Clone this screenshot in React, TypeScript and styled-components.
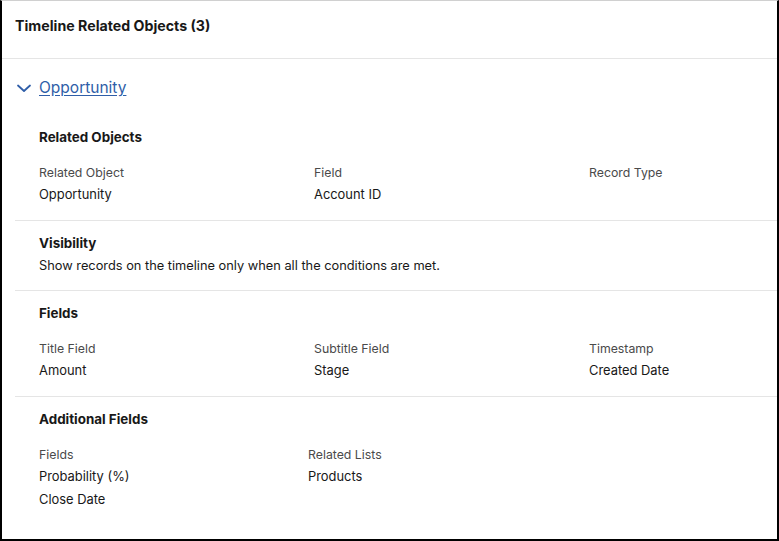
import React from 'react';
import styled, { createGlobalStyle } from 'styled-components';

const Global = createGlobalStyle`
    body {
        margin: 0;
        background: #ffffff;
        font-family: Inter, "Liberation Sans", Arial, sans-serif;
        color: #181818;
    }
`
const Frame = styled.div`
    width: 779px;
    height: 541px;
    box-sizing: border-box;
    border: 2px solid #000;
    border-top: 1px solid #d0d0d0;
    background: #fff;
    overflow: hidden;
`
const Header = styled.div`
    height: 58px;
    box-sizing: border-box;
    padding: 15px 13px 0;
    border-bottom: 1px solid #e5e5e5;
    font-size: 14.2px;
    font-weight: 700;
    line-height: 20px;
    color: #181818;
`
const Toggle = styled.div`
    display: flex;
    align-items: center;
    height: 20px;
    margin-top: 19px;
    padding-left: 14px;
    gap: 7px;
`
const ToggleLink = styled.a`
    font-size: 15.5px;
    line-height: 20px;
    color: #2f5ea8;
    text-decoration: underline;
    text-underline-offset: 2px;
    cursor: pointer;
`
const Section = styled.section<{ $first?: boolean }>`
    margin-left: 13px;
    padding: ${p => (p.$first ? '29px' : '12px')} 0 15px 24px;
    border-top: ${p => (p.$first ? 'none' : '1px solid #e5e5e5')};
`
const SectionTitle = styled.div`
    font-size: 13.4px;
    font-weight: 700;
    line-height: 20px;
`
const Grid = styled.div<{ $cols: string }>`
    display: grid;
    grid-template-columns: ${p => p.$cols};
    margin-top: 17px;
`
const Cell = styled.div`
    display: flex;
    flex-direction: column;
`
const Label = styled.div`
    font-size: 12.3px;
    line-height: 18px;
    color: #4a4a4a;
    margin-bottom: 3px;
`
const Value = styled.div`
    font-size: 12.9px;
    line-height: 20px;
    color: #181818;
    & + & {
        margin-top: 3px;
    }
`
const Description = styled.div`
    font-size: 12.8px;
    line-height: 18px;
    color: #181818;
    margin-top: 4px;
`

const Chevron = () => (
    <svg width="16" height="16" viewBox="0 0 16 16" fill="none">
        <path d="M2 5.5 L8 11 L14 5.5" stroke="#2f5ea8" strokeWidth="1.8" strokeLinecap="round" strokeLinejoin="round" />
    </svg>
)

type Field = { label: string; values: string[] }

const FieldGrid: React.FC<{ cols: string; fields: Field[] }> = ({ cols, fields }) => (
    <Grid $cols={cols}>
        {fields.map(f => (
            <Cell key={f.label}>
                <Label>{f.label}</Label>
                {f.values.map(v => <Value key={v}>{v}</Value>)}
            </Cell>
        ))}
    </Grid>
)

const App: React.FC = () => {
    return (
        <Frame>
            <Global />
            <Header>Timeline Related Objects (3)</Header>
            <Toggle>
                <Chevron />
                <ToggleLink>Opportunity</ToggleLink>
            </Toggle>
            <Section $first>
                <SectionTitle>Related Objects</SectionTitle>
                <FieldGrid
                    cols="275px 275px 1fr"
                    fields={[
                        { label: 'Related Object', values: ['Opportunity'] },
                        { label: 'Field', values: ['Account ID'] },
                        { label: 'Record Type', values: [] },
                    ]}
                />
            </Section>
            <Section>
                <SectionTitle>Visibility</SectionTitle>
                <Description>Show records on the timeline only when all the conditions are met.</Description>
            </Section>
            <Section>
                <SectionTitle>Fields</SectionTitle>
                <FieldGrid
                    cols="275px 275px 1fr"
                    fields={[
                        { label: 'Title Field', values: ['Amount'] },
                        { label: 'Subtitle Field', values: ['Stage'] },
                        { label: 'Timestamp', values: ['Created Date'] },
                    ]}
                />
            </Section>
            <Section>
                <SectionTitle>Additional Fields</SectionTitle>
                <FieldGrid
                    cols="269px 1fr"
                    fields={[
                        { label: 'Fields', values: ['Probability (%)', 'Close Date'] },
                        { label: 'Related Lists', values: ['Products'] },
                    ]}
                />
            </Section>
        </Frame>
    )
}

export default App;
